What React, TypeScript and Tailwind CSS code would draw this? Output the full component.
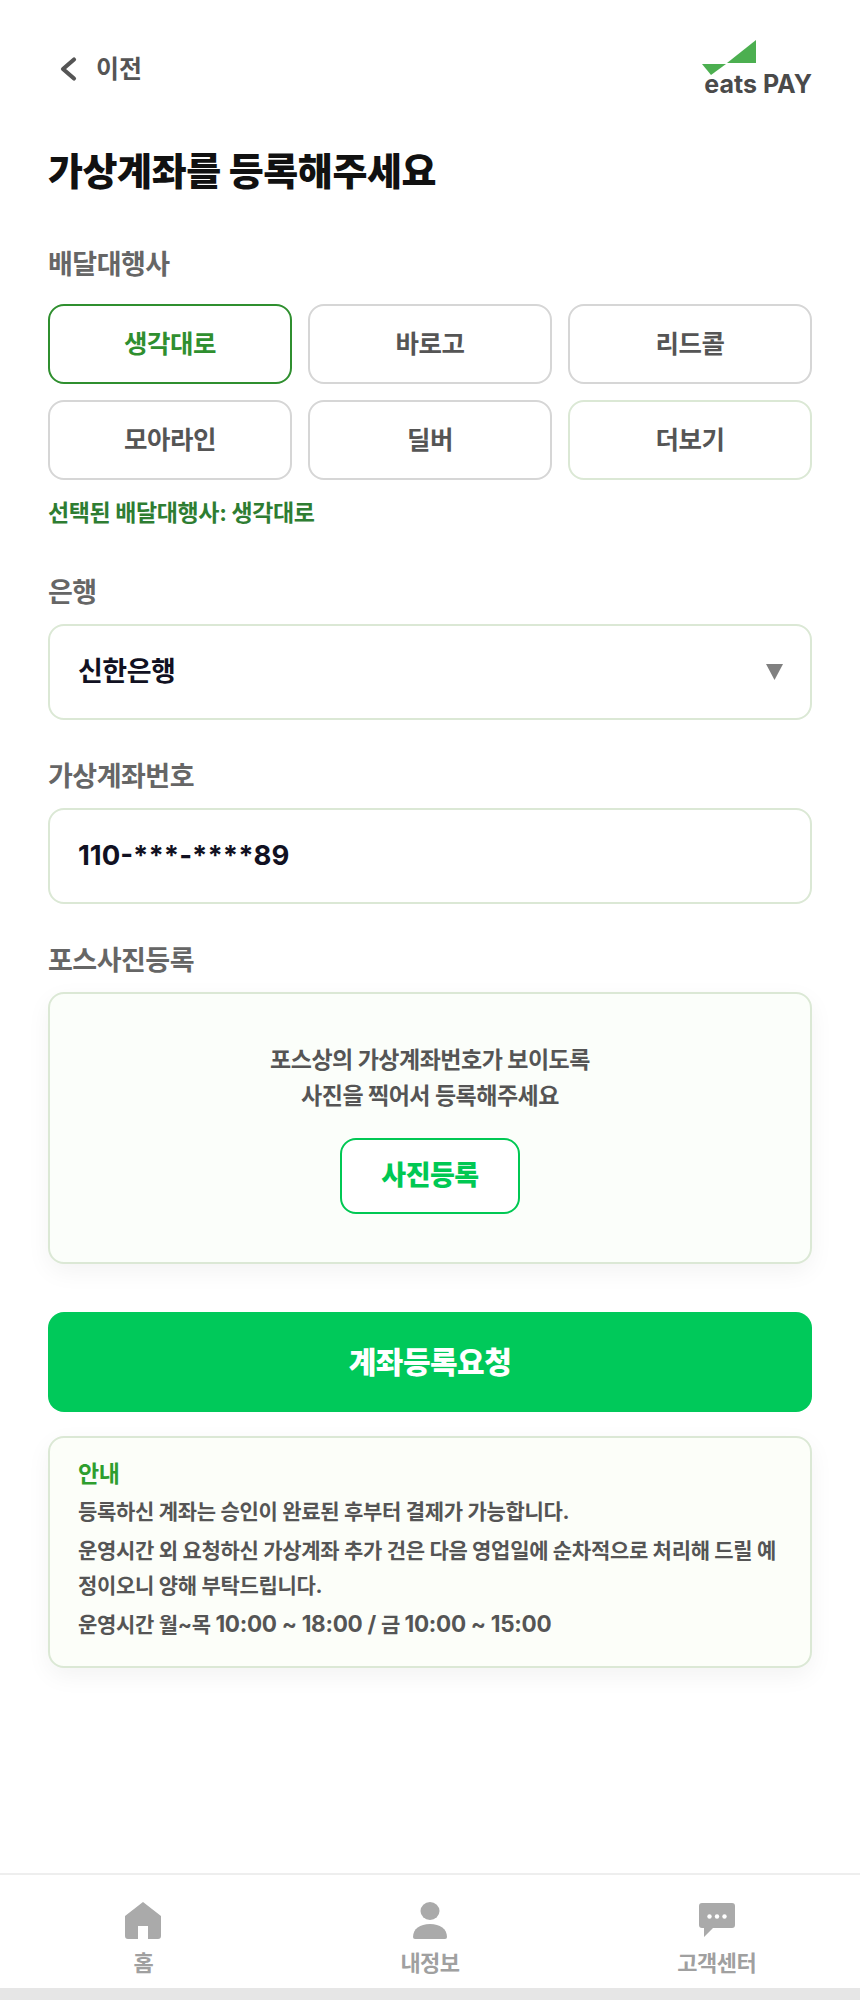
const FONT = "font-['Inter','Noto_Sans_CJK_KR',sans-serif]"

const couriers = ['생각대로', '바로고', '리드콜', '모아라인', '딜버', '더보기']

function CourierButton({ name, index }: { name: string; index: number }) {
  const selected = index === 0
  const more = index === 5
  return (
    <button
      className={`h-[80px] rounded-[16px] border-2 bg-white text-[25.5px] font-bold tracking-[-0.5px] ${
        selected
          ? 'border-[#2f8f2f] text-[#2f8f2f]'
          : more
            ? 'border-[#dbe8d5] text-[#555555]'
            : 'border-[#d6d6d6] text-[#555555]'
      }`}
    >
      {name}
    </button>
  )
}

function Label({ children }: { children: string }) {
  return <div className="text-[27px] leading-[32px] font-bold tracking-[-0.5px] text-[#666666]">{children}</div>
}

function BackIcon() {
  return (
    <svg width="17" height="26" viewBox="0 0 17 26" fill="none" stroke="#555555" strokeWidth="4.2" strokeLinecap="round" strokeLinejoin="round">
      <polyline points="14,3.5 3,13 14,22.5" />
    </svg>
  )
}

function HomeIcon() {
  return (
    <svg width="36" height="37" viewBox="0 0 36 37" fill="#aaaaaa">
      <path d="M18 0 L36 14 V34 Q36 37 33 37 H23 V24 H13 V37 H3 Q0 37 0 34 V14 Z" />
    </svg>
  )
}

function UserIcon() {
  return (
    <svg width="36" height="37" viewBox="0 0 36 37" fill="#aaaaaa">
      <ellipse cx="18" cy="9" rx="9.5" ry="9" />
      <path d="M1 35 C1 27 8 22 18 22 C28 22 35 27 35 35 Q35 37 33 37 H3 Q1 37 1 35 Z" />
    </svg>
  )
}

function ChatIcon() {
  return (
    <svg width="36" height="34" viewBox="0 0 36 34" fill="#aaaaaa">
      <path d="M3 0 H33 Q36 0 36 3 V22 Q36 25 33 25 H14 L5 34 V25 H3 Q0 25 0 22 V3 Q0 0 3 0 Z" />
      <circle cx="10.5" cy="13.5" r="2.2" fill="#ffffff" />
      <circle cx="18" cy="13.5" r="2.2" fill="#ffffff" />
      <circle cx="25.5" cy="13.5" r="2.2" fill="#ffffff" />
    </svg>
  )
}

export default function App() {
  return (
    <div className={`${FONT} min-h-[2000px] bg-[#e6e6e6]`}>
      <div className="flex h-[1988px] flex-col bg-white">
        <main className="flex-1 px-[48px]">
          <header className="flex h-[100px] items-start justify-between">
            <div className="mt-[53px] flex items-center gap-[19px] pl-[12px] text-[#555555]">
              <BackIcon />
              <span className="text-[25px] leading-[32px] font-bold">이전</span>
            </div>
            <div className="mt-[40px] flex flex-col items-end">
              <svg width="110" height="36" viewBox="0 0 110 36" className="-mb-[1px]">
                <path d="M54 0 V23 H25 Z" fill="#4caf50" />
                <path d="M0 24 H24 L9 35 Z" fill="#4caf50" />
              </svg>
              <span className="text-[25px] leading-[18px] font-bold text-[#4a4a4a]">eats PAY</span>
            </div>
          </header>

          <h1 className="mt-[48px] text-[38px] leading-[46px] font-extrabold tracking-[-0.4px] text-[#111111]">가상계좌를 등록해주세요</h1>

          <div className="mt-[55px]">
            <Label>배달대행사</Label>
            <div className="mt-[23px] grid grid-cols-3 gap-x-[16px] gap-y-[16px]">
              {couriers.map((name, i) => (
                <CourierButton key={name} name={name} index={i} />
              ))}
            </div>
            <div className="mt-[18px] text-[23px] leading-[30px] font-bold tracking-[-0.4px] text-[#2e7d32]">선택된 배달대행사: 생각대로</div>
          </div>

          <div className="mt-[49px]">
            <Label>은행</Label>
            <div className="mt-[15px] flex h-[96px] items-center justify-between rounded-[16px] border-2 border-[#dbe8d5] bg-white pr-[27px] pl-[28px]">
              <span className="text-[27px] font-bold tracking-[-0.5px] text-[#111122]">신한은행</span>
              <svg width="17" height="16" viewBox="0 0 17 16" fill="#808080">
                <path d="M0 0 H17 L8.5 16 Z" />
              </svg>
            </div>
          </div>

          <div className="mt-[41px]">
            <Label>가상계좌번호</Label>
            <div className="mt-[15px] flex h-[96px] items-center rounded-[16px] border-2 border-[#dbe8d5] bg-white pl-[28px]">
              <span className="text-[27.5px] font-bold text-[#111122]">110-***-****89</span>
            </div>
          </div>

          <div className="mt-[41px]">
            <Label>포스사진등록</Label>
            <div className="mt-[15px] flex h-[272px] flex-col items-center rounded-[16px] border-2 border-[#dbe8d5] bg-[#fbfefa] pt-[48px] shadow-[0_8px_24px_rgba(0,0,0,0.05)]">
              <p className="text-center text-[23px] leading-[36px] font-bold tracking-[-0.5px] text-[#555555]">
                포스상의 가상계좌번호가 보이도록
                <br />
                사진을 찍어서 등록해주세요
              </p>
              <button className="mt-[24px] h-[76px] w-[180px] rounded-[16px] border-2 border-[#00c853] bg-white text-[27px] font-extrabold tracking-[-0.5px] text-[#00c853]">사진등록</button>
            </div>
          </div>

          <button className="mt-[48px] block h-[100px] w-full rounded-[16px] bg-[#00c95a] text-[30px] font-extrabold tracking-[-0.5px] text-white">계좌등록요청</button>

          <div className="mt-[24px] rounded-[16px] border-2 border-[#dbe8d5] bg-[#fcfef9] px-[28px] pt-[21px] pb-[24px] text-[21px] font-bold tracking-[-0.3px] text-[#555555] shadow-[0_8px_24px_rgba(0,0,0,0.05)]">
            <div className="text-[23px] leading-[30px] text-[#2e9e2e]">안내</div>
            <p className="mt-[6px] leading-[34px]">등록하신 계좌는 승인이 완료된 후부터 결제가 가능합니다.</p>
            <p className="mt-[4px] leading-[35px] break-all">운영시간 외 요청하신 가상계좌 추가 건은 다음 영업일에 순차적으로 처리해 드릴 예정이오니 양해 부탁드립니다.</p>
            <p className="mt-[4px] leading-[34px]">
              운영시간 월~목 <span className="text-[22.5px]">10:00 ~ 18:00 / </span>금 <span className="text-[22.5px]">10:00 ~ 15:00</span>
            </p>
          </div>
        </main>

        <nav className="grid h-[115px] grid-cols-3 border-t-2 border-[#eeeeee] bg-white">
          <div className="flex flex-col items-center pt-[27px]">
            <HomeIcon />
            <span className="mt-[10px] text-[22px] leading-[28px] font-bold tracking-[-0.5px] text-[#a0a0a0]">홈</span>
          </div>
          <div className="flex flex-col items-center pt-[27px]">
            <UserIcon />
            <span className="mt-[10px] text-[22px] leading-[28px] font-bold tracking-[-0.5px] text-[#a0a0a0]">내정보</span>
          </div>
          <div className="flex flex-col items-center pt-[28px]">
            <ChatIcon />
            <span className="mt-[12px] text-[22px] leading-[28px] font-bold tracking-[-0.5px] text-[#a0a0a0]">고객센터</span>
          </div>
        </nav>
      </div>
    </div>
  )
}
